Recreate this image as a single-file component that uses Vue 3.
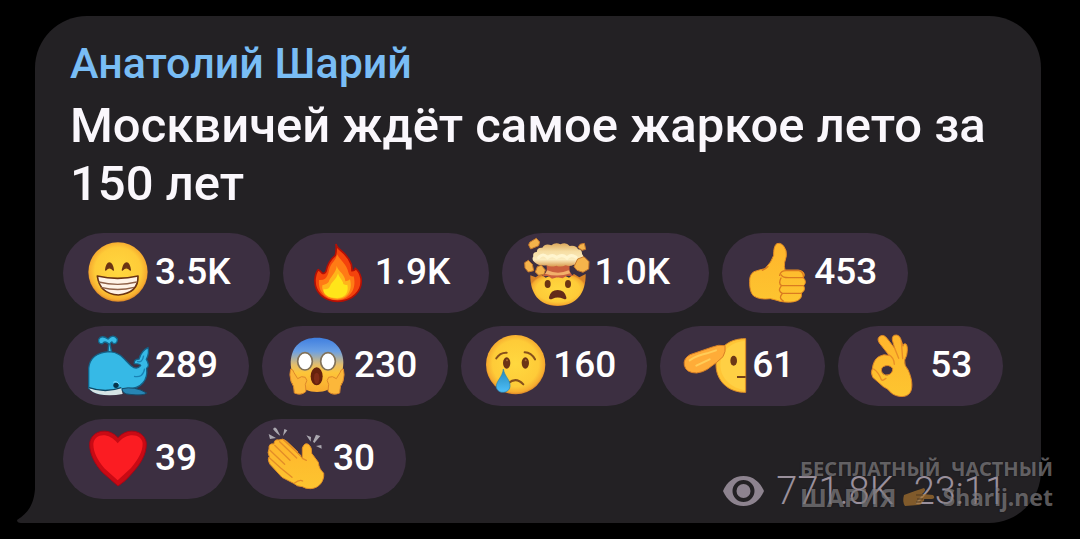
<script setup>
const reactions = [
  { icon: 'grin', box: '105 48 192 192', count: '3.5K' },
  { icon: 'fire', box: '90 48 192 192', count: '1.9K' },
  { icon: 'mind', box: '90 48 192 192', count: '1.0K' },
  { icon: 'thumb', box: '90 48 192 192', count: '453' },
  { icon: 'whale', box: '105 48 192 192', count: '289' },
  { icon: 'scream', box: '702 48 192 192', count: '230' },
  { icon: 'cry', box: '99 48 192 192', count: '160' },
  { icon: 'salute', box: '696 48 192 192', count: '61' },
  { icon: 'ok', box: '102 48 192 192', count: '53' },
  { icon: 'heart', box: '105 51 192 192', count: '39' },
  { icon: 'clap', box: '639 51 192 192', count: '30' },
]
</script>

<template>
  <main class="page">
    <svg class="defs" aria-hidden="true">
      <defs>
        <radialGradient id="face" cx="50%" cy="48%" r="52%">
          <stop offset="0" stop-color="#ffd83f" />
          <stop offset="0.75" stop-color="#fecb38" />
          <stop offset="0.93" stop-color="#f6ac30" />
          <stop offset="1" stop-color="#d98427" />
        </radialGradient>
        <linearGradient id="skin" x1="0" y1="0" x2="0" y2="1">
          <stop offset="0" stop-color="#ffb52c" />
          <stop offset="1" stop-color="#fdc530" />
        </linearGradient>
        <linearGradient id="fear" x1="0" y1="0" x2="0" y2="1">
          <stop offset="0" stop-color="#3f7fe0" />
          <stop offset="0.25" stop-color="#6ba0e4" />
          <stop offset="0.5" stop-color="#e5be6b" />
          <stop offset="0.65" stop-color="#fdc538" />
          <stop offset="1" stop-color="#f9a92e" />
        </linearGradient>
        <linearGradient id="cloud" x1="0" y1="0" x2="0" y2="1">
          <stop offset="0" stop-color="#dda85a" />
          <stop offset="0.35" stop-color="#f6dda2" />
          <stop offset="0.7" stop-color="#fbedc0" />
          <stop offset="1" stop-color="#d99a4d" />
        </linearGradient>
        <linearGradient id="tear" x1="0" y1="0" x2="0" y2="1">
          <stop offset="0" stop-color="#2587b8" />
          <stop offset="1" stop-color="#4ec0fa" />
        </linearGradient>
      </defs>
    </svg>

    <article class="bubble">
      <svg class="tail" viewBox="0 0 19 52" aria-hidden="true">
        <path d="M18 0V18C17 31 13 41 0 49Q0 52 4 52H19V0Z" fill="#232124" />
      </svg>
      <a class="author" href="#">Анатолий Шарий</a>
      <p class="message">Москвичей ждёт самое жаркое лето за 150 лет</p>

      <div class="reactions">
        <button
          v-for="r in reactions"
          :key="r.icon"
          type="button"
          class="chip"
          :class="{ rounded: r.count.endsWith('K') }"
        >
          <svg class="emoji" :viewBox="r.box" aria-hidden="true">
            <g v-if="r.icon === 'grin'">
              <circle cx="204" cy="141" r="89" fill="url(#face)" />
              <path d="M167 135Q170 114 178 114Q187 115 190 135Q178 122 167 135ZM217 135Q221 114 230 114Q238 115 241 135Q229 122 217 135Z" fill="#6b3413" stroke="#6b3413" stroke-width="4" stroke-linejoin="round" />
              <path d="M142 153Q203 167 264 153Q266 204 205 210Q149 207 142 153Z" fill="#fff3e7" stroke="#6b3413" stroke-width="5" stroke-linejoin="round" />
              <path d="M146 171Q203 185 260 171M153 187Q204 200 252 187" fill="none" stroke="#8f6249" stroke-width="4" />
            </g>

            <g v-else-if="r.icon === 'fire'">
              <path d="M183 57C187 77 214 78 229 118Q231 128 231 137Q240 137 241 130Q253 138 258 159C264 199 230 229 188 229C146 229 117 200 120 162Q122 143 130 134Q136 137 141 144Q148 148 153 139C157 119 166 103 181 91Q185 75 183 57Z" fill="#f4430c" stroke="#b51005" stroke-width="5" />
              <path d="M186 88C198 109 214 115 221 145Q225 157 236 154C247 196 220 225 187 225C153 225 128 201 132 165Q144 166 150 161Q159 154 162 136C167 113 183 108 186 88Z" fill="#ff7b15" />
              <path d="M185 123C190 140 210 147 211 169Q222 167 225 163C234 198 216 222 187 222C158 222 138 202 142 181Q158 176 161 171C164 157 184 143 185 123Z" fill="#ffb41b" />
              <path d="M189 145C193 160 204 166 205 177Q213 181 217 179C222 201 211 219 186 219C160 220 143 207 146 192Q160 195 165 184C170 170 185 163 189 145Z" fill="#ffe51a" />
            </g>

            <g v-else-if="r.icon === 'mind'">
              <path d="M109 151L125 157L139 147L155 158L172 151L190 157L208 150L225 158L240 147L256 157L275 147C276 205 247 242 192 243C135 244 108 204 109 151Z" fill="url(#face)" />
              <path d="M157 119H227Q223 147 241 153L218 152L206 160L190 157L174 161L162 153L144 154Q164 142 157 119Z" fill="#cb603d" />
              <path d="M160 136Q192 150 224 136L229 145Q191 158 153 146Z" fill="#f2b06a" />
              <path d="M121 111Q112 104 118 94Q115 82 129 80Q128 67 145 68Q154 53 172 61Q185 50 199 58Q216 49 227 63Q247 60 252 73Q265 74 264 87Q274 99 263 108Q255 122 239 119Q228 126 215 121Q200 128 187 122Q171 128 158 121Q134 124 121 111Z" fill="url(#cloud)" />
              <path d="M134 98Q147 82 161 98Q175 86 188 98Q205 85 219 99Q230 86 246 97" fill="none" stroke="#fff5cf" stroke-width="9" stroke-linecap="round" />
              <g fill="#f5b44b" stroke="#c7792d" stroke-width="3" stroke-linejoin="round">
                <path d="M107 52L127 40L137 51L134 62L110 72L104 60Z" />
                <path d="M258 58L271 55L275 73L264 76L252 67Z" />
                <path d="M92 113L103 106L115 118L119 137L103 141L93 129Z" />
                <path d="M130 125L142 121L154 135L150 148L134 151L124 141Z" />
                <path d="M251 102L270 95L285 110L284 132L267 142L249 136L240 125Z" />
              </g>
              <ellipse cx="161" cy="177" rx="9" ry="12" fill="#6c3513" />
              <ellipse cx="222" cy="177" rx="9" ry="12" fill="#6c3513" />
              <path d="M165 217Q170 195 191 195Q212 195 217 217Q219 226 208 221Q190 214 176 221Q164 226 165 217Z" fill="#642a19" />
            </g>

            <g v-else-if="r.icon === 'thumb'">
              <path d="M120 140Q137 134 153 131Q173 111 179 91Q178 65 188 56Q206 50 216 77Q220 91 212 112Q210 125 213 135H253Q271 138 271 151L268 158Q280 171 269 182Q276 197 262 204Q266 219 250 227Q230 235 198 229Q183 224 169 221Q137 225 119 213Q106 201 107 170Q106 148 120 140Z" fill="url(#skin)" stroke="#e38b23" stroke-width="3" />
              <path d="M145 136Q155 133 162 125M197 151Q200 136 219 137H255Q270 142 268 158H223Q205 158 202 150M201 159Q192 176 203 182H268M201 184Q190 198 205 205H261M204 207Q193 220 208 228" fill="none" stroke="#da7b20" stroke-width="4" stroke-linecap="round" />
            </g>

            <g v-else-if="r.icon === 'whale'">
              <path d="M174 104L176 77Q163 67 158 77Q144 79 146 64Q154 49 174 63Q190 46 202 63Q203 78 190 77Q185 66 180 78L185 104Z" fill="#38bce8" stroke="#13678b" stroke-width="4" />
              <path d="M116 211V151C119 118 143 103 178 101C212 102 224 127 244 144Q260 157 272 143Q271 137 253 137Q251 124 267 123Q275 97 294 89Q299 105 289 124Q301 143 290 151C294 185 275 212 235 213Q205 219 193 227Q143 235 116 211Z" fill="#36b9e6" stroke="#146187" stroke-width="4" />
              <path d="M116 210Q159 225 213 209L218 228Q180 235 147 229Q126 224 116 210Z" fill="#d6e4e5" />
              <path d="M117 209Q166 226 214 209" fill="none" stroke="#0e4865" stroke-width="4" />
              <path d="M216 212Q253 203 290 225Q282 234 238 229Q217 228 216 212Z" fill="#2785b4" stroke="#154c6b" stroke-width="3" />
              <circle cx="198" cy="202" r="8" fill="#07344a" />
              <path d="M190 193Q200 187 208 199" fill="none" stroke="#87dfff" stroke-width="3" />
              <path d="M261 130Q277 136 281 113M252 175Q279 181 284 152" fill="none" stroke="#1983b5" stroke-width="4" />
            </g>

            <g v-else-if="r.icon === 'scream'">
              <path d="M722 132C724 84 755 59 801 59C847 59 878 85 880 132C880 184 849 222 801 222C752 222 722 184 722 132Z" fill="url(#fear)" />
              <path d="M722 153Q729 153 732 164L743 182Q755 172 766 178Q775 187 766 199L768 220Q755 234 733 225Q733 203 723 190Q717 169 722 153ZM880 153Q873 153 870 164L859 182Q847 172 836 178Q827 187 836 199L834 220Q847 234 869 225Q869 203 879 190Q885 169 880 153Z" fill="#fcb73a" stroke="#de882a" stroke-width="3" />
              <ellipse cx="765" cy="130" rx="22" ry="26" fill="#fff" stroke="#817158" stroke-width="5" />
              <ellipse cx="834" cy="130" rx="22" ry="26" fill="#fff" stroke="#817158" stroke-width="5" />
              <ellipse cx="800" cy="175" rx="18" ry="27" fill="#66220d" />
              <ellipse cx="800" cy="181" rx="8" ry="17" fill="#7f2d17" />
            </g>

            <g v-else-if="r.icon === 'cry'">
              <circle cx="197" cy="140" r="89" fill="url(#face)" />
              <path d="M139 121Q150 103 170 104M224 103Q244 104 255 124M175 196Q198 175 220 199" fill="none" stroke="#87501b" stroke-width="6" stroke-linecap="round" />
              <ellipse cx="170" cy="135" rx="11" ry="17" fill="#6b3415" />
              <ellipse cx="226" cy="135" rx="11" ry="17" fill="#6b3415" />
              <circle cx="171" cy="127" r="3" fill="#a96a33" />
              <circle cx="227" cy="127" r="3" fill="#a96a33" />
              <path d="M160 153C164 177 182 185 180 206C178 226 145 230 139 209C137 188 158 178 160 153Z" fill="url(#tear)" stroke="#2d83a9" stroke-width="2" />
            </g>

            <g v-else-if="r.icon === 'salute'">
              <path d="M887 62C836 61 799 92 798 140C798 189 836 224 887 223Z" fill="#ffc536" stroke="#dd8c29" stroke-width="3" />
              <path d="M884 69C845 71 812 98 811 140C811 182 846 211 884 216Z" fill="#ffd044" />
              <path d="M825 83Q805 79 787 87L720 110Q699 122 703 142Q708 165 740 165Q760 162 772 154Q785 144 799 134L819 116Q828 101 825 83Z" fill="#ffac38" stroke="#d87f25" stroke-width="3" />
              <path d="M719 127Q742 112 771 106L798 97M739 143Q758 134 779 124" fill="none" stroke="#ffcd58" stroke-width="6" stroke-linecap="round" />
              <ellipse cx="851" cy="128" rx="10" ry="15" fill="#6c3716" />
              <path d="M861 177H887" stroke="#744119" stroke-width="6" />
            </g>

            <g v-else-if="r.icon === 'ok'">
              <path fill-rule="evenodd" d="M190 113L160 75Q151 61 163 54Q174 48 184 62L206 91L199 66Q197 51 211 51Q222 52 226 68L231 85Q231 75 240 78Q247 86 242 112L236 126Q234 143 246 155C257 178 262 206 253 223C241 243 209 236 196 225Q187 212 172 206L140 178Q133 162 139 152Q142 126 158 116Q173 106 190 113ZM172 146Q163 151 168 164Q176 175 189 170Q201 164 200 151Q188 137 172 146Z" fill="url(#skin)" stroke="#dd8526" stroke-width="3" />
              <path d="M187 109Q205 119 205 139M206 91L218 121M226 70L230 122M143 153Q158 163 166 185Q170 190 180 181" fill="none" stroke="#e88e26" stroke-width="4" stroke-linecap="round" />
            </g>

            <g v-else-if="r.icon === 'heart'">
              <path d="M204 228L157 187C135 162 118 132 119 101C121 65 171 47 204 83C237 47 287 65 289 101C289 136 270 163 247 189Q226 215 204 228Z" fill="#c90a14" stroke="#a70615" stroke-width="3" />
              <path d="M203 211L163 175C143 151 130 127 130 102C133 72 174 64 203 100C230 64 277 71 278 101C278 126 263 150 243 174Z" fill="#fb1c22" />
            </g>

            <g v-else>
              <path d="M739 125L757 144L757 114Q764 95 777 104Q786 112 785 130L805 157Q807 178 821 189C824 213 807 235 782 236Q768 237 757 230Q741 230 731 220L696 202L660 163Q651 147 658 140Q651 127 657 117Q655 99 672 102Q672 87 687 90Q697 83 710 94L744 126Z" fill="url(#skin)" stroke="#e08d27" stroke-width="3" />
              <path d="M660 121L704 163M658 143L692 174L726 202M674 106L720 151M689 95L740 144M701 90L752 137M757 145L769 151M733 220Q749 207 758 213" fill="none" stroke="#e38d28" stroke-width="4" stroke-linecap="round" />
              <path d="M656 72L678 84L660 87ZM669 57Q675 47 681 58L691 77Q681 73 669 57ZM703 57L712 61L699 78ZM769 76L783 81L782 95ZM798 74L811 78L793 99L789 95ZM798 108L814 105L815 116Z" fill="#aaa7af" />
            </g>
          </svg>
          <span class="count">{{ r.count }}</span>
        </button>

        <div class="meta">
          <svg class="eye" viewBox="0 0 41 30" aria-hidden="true">
            <path fill-rule="evenodd" d="M20.500 0C30 0 37 6 41 15C37 24 30 30 20.500 30C11 30 4 24 0 15C4 6 11 0 20.500 0ZM20.500 4A11 11 0 1 0 20.500 26A11 11 0 1 0 20.500 4Z" fill="#8d838f" />
            <circle cx="20.500" cy="15" r="7" fill="#8d838f" />
          </svg>
          <span>771.8K</span>
          <time>23:11</time>
        </div>
      </div>
    </article>

    <aside class="watermark">
      <span class="mark-top">БЕСПЛАТНЫЙ&nbsp; ЧАСТНЫЙ</span>
      <span class="mark-bottom">
        <span class="mark-name">ШАРИЯ</span>
        <svg class="point" viewBox="0 0 34 20" aria-hidden="true">
          <path d="M2 8L13 4L22 1Q25 3 20 7L31 8Q34 11 30 12L22 12Q23 14 20 15Q20 18 16 18L3 19Q0 15 2 8Z" fill="#a8742f" fill-opacity="0.7" />
          <path d="M14 8H21M15 12H21M14 15H19" stroke="#4f3821" stroke-width="1" />
        </svg>
        <span>Sharij.net</span>
      </span>
    </aside>
  </main>
</template>

<style>
body {
  margin: 0;
  background: #000;
}
</style>

<style scoped>
.page {
  position: relative;
  box-sizing: border-box;
  min-height: 100vh;
  padding: 16px 39px 16px 35px;
  background: #000;
  font-family: Roboto, "Noto Sans", sans-serif;
}
.defs {
  position: absolute;
  width: 0;
  height: 0;
}
.bubble {
  position: relative;
  padding: 18px 35px 10px 28px;
  border-radius: 52px 52px 52px 0;
  background: #232124;
}
.tail {
  position: absolute;
  left: -18px;
  bottom: 0;
  width: 19px;
  height: 52px;
}
.author {
  display: block;
  margin-left: 7px;
  color: #79bdf5;
  font-size: 43px;
  font-weight: 500;
  line-height: 58px;
  text-decoration: none;
}
.message {
  margin: 5px 0 20px 7px;
  color: #faf7fc;
  font-size: 49px;
  font-weight: 500;
  line-height: 58px;
}
.reactions {
  display: flex;
  flex-wrap: wrap;
  align-items: flex-start;
  gap: 13px;
}
.chip {
  display: flex;
  align-items: center;
  gap: 6px;
  height: 80px;
  padding: 0 31px 0 22px;
  border: 0;
  border-radius: 40px;
  background: #3c2f41;
  color: #fff;
  font: 500 37px/44px Roboto, "Noto Sans", sans-serif;
  cursor: pointer;
}
.chip.rounded {
  padding-right: 39px;
}
.count {
  padding-bottom: 2px;
}
.emoji {
  width: 64px;
  height: 64px;
  overflow: visible;
}
.meta {
  display: flex;
  align-items: center;
  gap: 12px;
  margin: 50px 0 0 auto;
  color: #9a909c;
  font-size: 38px;
  font-weight: 300;
  line-height: 44px;
}
.meta time {
  margin-left: 8px;
}
.eye {
  width: 41px;
  height: 30px;
}
.watermark {
  position: absolute;
  right: 27px;
  bottom: 28px;
  display: flex;
  flex-direction: column;
  color: rgba(150, 148, 151, 0.6);
  font-family: "Noto Sans", sans-serif;
  font-size: 20px;
  font-weight: 700;
  line-height: 28px;
  text-shadow: 0 0 2px rgba(0, 0, 0, 0.4);
  pointer-events: none;
}
.mark-bottom {
  display: flex;
  align-items: center;
  gap: 6px;
  font-size: 23px;
}
.mark-name {
  font-size: 25px;
}
.point {
  width: 34px;
  height: 20px;
}
</style>
